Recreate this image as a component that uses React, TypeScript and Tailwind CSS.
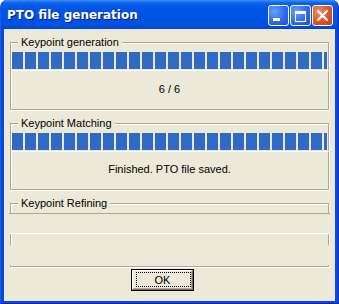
import React from "react";

const font = { fontFamily: '"Liberation Sans", Arial, sans-serif' };

function Blocks() {
  return (
    <div className="flex gap-[2px] overflow-hidden h-[17px] w-[315px]">
      {Array.from({ length: 25 }).map((_, i) => (
        <div key={i} className="shrink-0 w-[11px] h-[17px] bg-[#316ac5]" />
      ))}
    </div>
  );
}

function Group({
  label,
  heightClass,
  children,
  mtClass,
}: {
  label: string;
  heightClass: string;
  mtClass: string;
  children: React.ReactNode;
}) {
  return (
    <div
      className={`relative mx-[6px] ${mtClass} ${heightClass} border border-[#aca899] shadow-[1px_1px_0_#ffffff,inset_1px_1px_0_#ffffff] flex flex-col`}
    >
      <div className="absolute -top-[8px] left-[7px] px-[3px] bg-[#ece9d8] text-[11px] leading-[14px] text-black whitespace-nowrap">
        {label}
      </div>
      {children}
    </div>
  );
}

export default function App() {
  return (
    <div className="w-[339px] h-[304px] bg-white" style={font}>
      <div className="w-[339px] h-[304px] flex flex-col rounded-t-[7px] overflow-hidden bg-[#0a4ad8] border-r border-r-[#0b2fb5] border-b border-b-[#0a22b0] border-l border-l-[#1a5ae4]">
        {/* Title bar */}
        <div className="h-[29px] shrink-0 flex items-center bg-[linear-gradient(180deg,#3d8ff8_0px,#0d61ec_3px,#0055e5_8px,#0054e3_20px,#0050de_26px,#0044cc_29px)]">
          <div
            className="pl-[6px] pt-[1px] text-white font-bold text-[12px] leading-[14px] [text-shadow:1px_1px_0_#0a1883] whitespace-nowrap"
            style={{ fontFamily: '"DejaVu Sans", Verdana, sans-serif' }}
          >
            PTO file generation
          </div>
          <div className="ml-auto flex gap-[1px] pr-[5px] pt-[1px]">
            <div className="relative w-[21px] h-[21px] rounded-[3px] border border-white bg-[radial-gradient(circle_at_30%_30%,#6aa2fb_0%,#2f6bea_55%,#1b4fd6_100%)]">
              <div className="absolute left-[4px] top-[12px] w-[7px] h-[3px] bg-white" />
            </div>
            <div className="relative w-[21px] h-[21px] rounded-[3px] border border-white bg-[radial-gradient(circle_at_30%_30%,#6aa2fb_0%,#2f6bea_55%,#1b4fd6_100%)]">
              <div className="absolute left-[4px] top-[5px] w-[11px] h-[11px] border border-white border-t-[3px]" />
            </div>
            <div className="relative w-[21px] h-[21px] rounded-[3px] border border-white bg-[radial-gradient(circle_at_30%_30%,#f0906c_0%,#e0562f_50%,#c43c1c_100%)]">
              <svg className="absolute left-[4px] top-[4px]" width="11" height="11" viewBox="0 0 11 11">
                <path d="M1 1 L10 10 M10 1 L1 10" stroke="white" strokeWidth="2.2" strokeLinecap="square" />
              </svg>
            </div>
          </div>
        </div>

        {/* Client area */}
        <div className="flex-1 mx-[3px] mb-[2px] bg-[#ece9d8] flex flex-col">
          <Group label="Keypoint generation" mtClass="mt-[13px]" heightClass="h-[68px]">
            <div className="mt-[9px] mx-[1px] h-[19px] border-b border-white -mr-[1px]">
              <Blocks />
            </div>
            <div className="flex-1 flex items-center justify-center text-[11px] leading-[13px] text-black pb-[1px]">
              6 / 6
            </div>
          </Group>

          <Group label="Keypoint Matching" mtClass="mt-[13px]" heightClass="h-[67px]">
            <div className="mt-[9px] mx-[1px] h-[19px] border-b border-white -mr-[1px]">
              <Blocks />
            </div>
            <div className="flex-1 flex items-center justify-center text-[11px] leading-[13px] text-black pb-[2px]">
              Finished. PTO file saved.
            </div>
          </Group>

          <Group label="Keypoint Refining" mtClass="mt-[13px]" heightClass="h-[64px]">
            <div className="mt-[9px] -mx-[2px] h-[21px] shrink-0 bg-[#ece9d8] border-t border-t-[#aca899] border-b border-b-white" />
            <div className="h-[11px] shrink-0" />
            <div className="-mx-[2px] h-[20px] shrink-0 bg-[#ece9d8]" />
          </Group>

          <div className="mt-[2px] pl-[127px]">
            <div className="relative w-[63px] h-[22px] border border-black bg-[#ece9d8]">
              <div className="absolute inset-0 border-t border-l border-white border-r border-r-[#716f64] border-b border-b-[#716f64]" />
              <div className="absolute left-[1px] top-[1px] right-[1px] bottom-[1px] border-r border-b border-[#aca899]" />
              <div className="absolute left-[4px] top-[2px] right-[2px] bottom-[3px] border border-dotted border-black" />
              <div className="absolute inset-0 flex items-center justify-center text-[11px] leading-[13px] text-black">
                OK
              </div>
            </div>
          </div>
        </div>
      </div>
    </div>
  );
}
